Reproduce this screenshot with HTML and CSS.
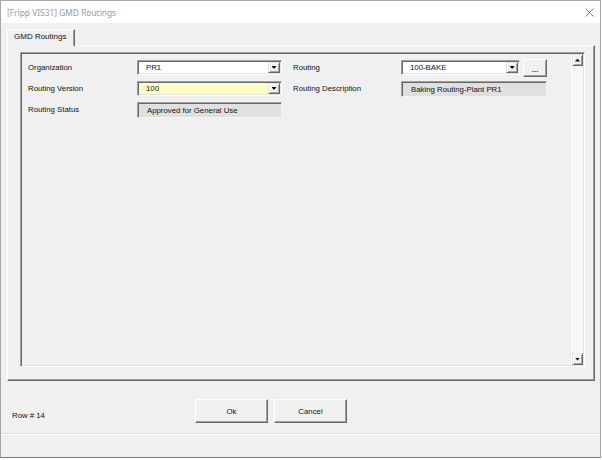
FILE: index.html
```html
<!DOCTYPE html>
<html lang="en">
<head>
  <meta charset="UTF-8">
  <meta name="viewport" content="width=device-width, initial-scale=1.0">
  <title>GMD Routings</title>
  <link rel="stylesheet" href="styles.css">
</head>
<body>
  <div class="window">
    <div class="titlebar">
      <span class="titlebar__text">[Fripp VIS31] GMD Routings</span>
      <svg class="titlebar__close" width="9" height="9" viewBox="0 0 9 9">
        <path d="M0.5 0.5L8.5 8.5M8.5 0.5L0.5 8.5" stroke="#6b6b6b" stroke-width="0.9" fill="none"/>
      </svg>
    </div>

    <div class="client">
      <div class="tabs">
        <div class="tab">GMD Routings</div>
      </div>

      <div class="page">
        <div class="frame">
          <div class="fields">
            <span class="label">Organization</span>
            <div class="cell">
              <div class="combo"><span class="combo__text">PR1</span><span class="drop"></span></div>
            </div>
            <span class="label">Routing</span>
            <div class="cell">
              <div class="combo combo--short"><span class="combo__text">100-BAKE</span><span class="drop"></span></div>
              <button class="btn btn--dots">...</button>
            </div>

            <span class="label">Routing Version</span>
            <div class="cell">
              <div class="combo combo--yellow"><span class="combo__text">100</span><span class="drop"></span></div>
            </div>
            <span class="label">Routing Description</span>
            <div class="cell">
              <div class="textbox textbox--wide">Baking Routing-Plant PR1</div>
            </div>

            <span class="label">Routing Status</span>
            <div class="cell">
              <div class="textbox">Approved for General Use</div>
            </div>
          </div>

          <div class="scrollbar">
            <div class="scrollbar__btn scrollbar__btn--up"></div>
            <div class="scrollbar__track"></div>
            <div class="scrollbar__btn scrollbar__btn--down"></div>
          </div>
        </div>
      </div>

      <div class="footer">
        <span class="footer__row">Row # 14</span>
        <button class="btn btn--cmd">Ok</button>
        <button class="btn btn--cmd">Cancel</button>
      </div>
      <div class="statusbar"></div>
    </div>
  </div>
</body>
</html>
```

FILE: styles.css
```css
* {
  box-sizing: border-box;
}

body {
  margin: 0;
  background: #fff;
  font-family: "Liberation Sans", Arial, sans-serif;
  font-size: 7.8px;
  color: #111;
}

/* ventana */
.window {
  width: 601px;
  height: 458px;
  border: 1px solid #a6a6a6;
  border-bottom-color: #7a7a7a;
  display: flex;
  flex-direction: column;
  background: #f0f0f0;
}

.titlebar {
  flex: none;
  height: 22px;
  background: #fff;
  display: flex;
  align-items: center;
  justify-content: space-between;
  padding: 0 6px;
}

.titlebar__text {
  font-family: "Noto Sans", sans-serif;
  font-size: 8.4px;
  color: #9a9a9a;
}

.client {
  flex: 1;
  display: flex;
  flex-direction: column;
}

/* pestañas */
.tabs {
  padding: 6px 0 0 6px;
  margin-bottom: -1px;
  display: flex;
}

.tab {
  position: relative;
  z-index: 1;
  width: 68px;
  height: 17px;
  padding-left: 6px;
  line-height: 14px;
  font-size: 8px;
  background: #f0f0f0;
  border: 1px solid;
  border-color: #fff #696969 transparent #fff;
  border-bottom: 0;
  box-shadow: inset -1px 0 #a0a0a0;
}

.page {
  margin-left: 6px;
  width: 588px;
  height: 336px;
  border: 1px solid;
  border-color: #fff #696969 #696969 #fff;
  box-shadow: inset -1px -1px #a0a0a0;
  padding: 6px 0 0 12px;
}

.frame {
  width: 565px;
  height: 315px;
  border: 1px solid;
  border-color: #a0a0a0 #fff #fff #a0a0a0;
  box-shadow: inset 1px 1px #696969, inset -1px -1px #e3e3e3;
  padding: 1px;
  display: flex;
}

/* campos */
.fields {
  flex: 1;
  padding: 6px 0 0 6px;
  display: grid;
  grid-template-columns: 109px 156px 108px 146px;
  grid-auto-rows: 15px;
  row-gap: 6px;
  align-content: start;
  align-items: center;
}

.label {
  padding-top: 1px;
  line-height: 12px;
}

.cell {
  display: flex;
  align-items: center;
  height: 15px;
}

.combo {
  width: 145px;
  height: 15px;
  display: flex;
  background: #fff;
  border: 1px solid;
  border-color: #a0a0a0 #fff #fff #a0a0a0;
  box-shadow: inset 1px 1px #696969, inset -1px -1px #e3e3e3;
  padding: 1px;
}

.combo--short {
  width: 120px;
}

.combo--yellow {
  background: #fffbc4;
}

.combo__text {
  flex: 1;
  padding-left: 7px;
  line-height: 11px;
}

.drop {
  width: 12px;
  height: 11px;
  background: #f0f0f0;
  border: 1px solid;
  border-color: #e3e3e3 #696969 #696969 #e3e3e3;
  box-shadow: inset 1px 1px #fff, inset -1px -1px #a0a0a0;
  display: flex;
  align-items: center;
  justify-content: center;
}

.drop::after,
.scrollbar__btn::after {
  content: "";
  display: block;
  width: 5px;
  height: 3px;
  background: #000;
  clip-path: polygon(0 0, 100% 0, 50% 100%);
}

.textbox {
  width: 145px;
  height: 16px;
  padding: 1px 0 0 9px;
  line-height: 13px;
  background: #e0e0e0;
  border: 1px solid;
  border-color: #a0a0a0 #f4f4f4 #f4f4f4 #a0a0a0;
  box-shadow: inset 1px 1px #696969;
}

.textbox--wide {
  width: 146px;
}

/* botones */
.btn {
  font: inherit;
  color: #111;
  background: #f0f0f0;
  border: 1px solid;
  border-color: #fff #696969 #696969 #fff;
  box-shadow: inset -1px -1px #a0a0a0;
  padding: 0;
  cursor: pointer;
}

.btn--dots {
  width: 24px;
  height: 18px;
  margin-left: 3px;
  padding-top: 4px;
  font-weight: bold;
  color: #2a2a5a;
  line-height: 10px;
}

.btn--cmd {
  width: 73px;
  height: 24px;
  margin-right: 6px;
}

/* barra de desplazamiento */
.scrollbar {
  width: 12px;
  display: flex;
  flex-direction: column;
  background: #f7f7f7;
  border-left: 1px solid #fff;
}

.scrollbar__btn {
  height: 12px;
  background: #f0f0f0;
  border: 1px solid;
  border-color: #e3e3e3 #696969 #696969 #e3e3e3;
  box-shadow: inset 1px 1px #fff, inset -1px -1px #a0a0a0;
  display: flex;
  align-items: center;
  justify-content: center;
}

.scrollbar__btn--up::after {
  clip-path: polygon(50% 0, 100% 100%, 0 100%);
}

.scrollbar__track {
  flex: 1;
}

/* pie */
.footer {
  height: 53px;
  display: flex;
  align-items: flex-start;
  padding: 18px 0 0 11px;
}

.footer__row {
  width: 183px;
  margin-top: 11px;
  line-height: 12px;
}

.statusbar {
  flex: 1;
  border-top: 1px solid #fff;
  box-shadow: 0 -1px #dcdcdc;
}
```
